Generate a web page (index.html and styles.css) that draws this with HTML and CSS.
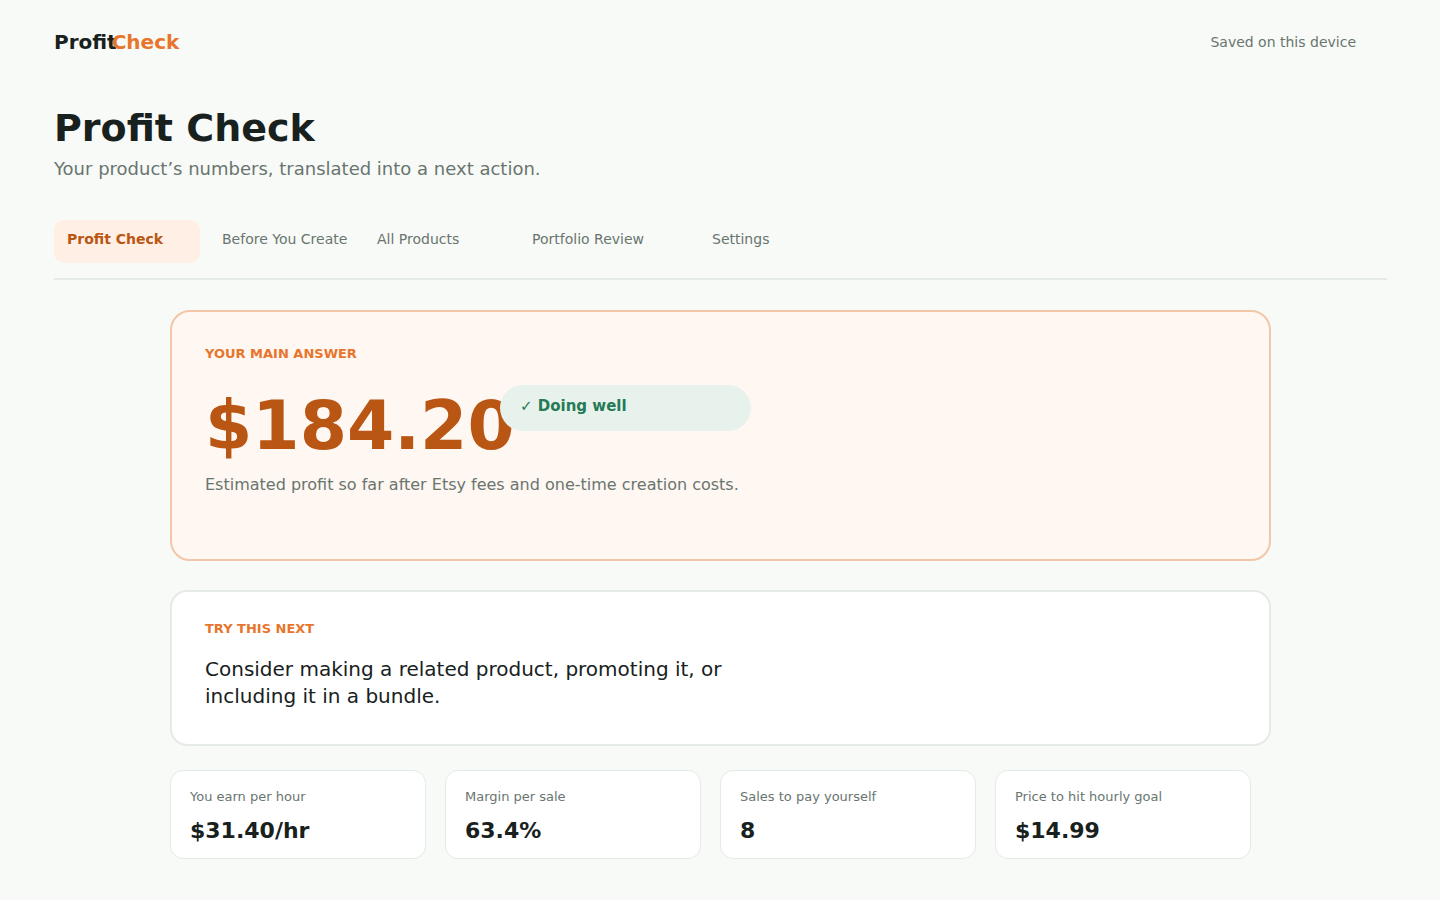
FILE: index.html
```html
<!DOCTYPE html>
<html lang="en">
<head>
<meta charset="utf-8">
<meta name="viewport" content="width=device-width, initial-scale=1">
<title>Profit Check</title>
<link rel="stylesheet" href="styles.css">
</head>
<body>
<div class="page">
  <header class="topbar">
    <div class="logo"><span>Profit</span><span class="logo-accent">Check</span></div>
    <span class="saved">Saved on this device</span>
  </header>
  <div class="intro">
    <h1 class="title">Profit Check</h1>
    <p class="subtitle">Your product’s numbers, translated into a next action.</p>
  </div>
  <nav class="tabs">
    <a class="tab tab-active" href="#" aria-current="page">Profit Check</a>
    <a class="tab" href="#">Before You Create</a>
    <a class="tab" href="#">All Products</a>
    <a class="tab tab-wide" href="#">Portfolio Review</a>
    <a class="tab" href="#">Settings</a>
  </nav>
  <main class="content">
    <section class="card answer">
      <h2 class="eyebrow">YOUR MAIN ANSWER</h2>
      <div class="result">
        <div class="amount">$184.20</div>
        <div class="pill">✓ Doing well</div>
      </div>
      <p class="note">Estimated profit so far after Etsy fees and one-time creation costs.</p>
    </section>
    <section class="card next">
      <h2 class="eyebrow">TRY THIS NEXT</h2>
      <p class="advice">Consider making a related product, promoting it, or including it in a bundle.</p>
    </section>
    <dl class="stats">
      <div class="stat"><dt>You earn per hour</dt><dd>$31.40/hr</dd></div>
      <div class="stat"><dt>Margin per sale</dt><dd>63.4%</dd></div>
      <div class="stat"><dt>Sales to pay yourself</dt><dd>8</dd></div>
      <div class="stat"><dt>Price to hit hourly goal</dt><dd>$14.99</dd></div>
    </dl>
  </main>
</div>
</body>
</html>
```
FILE: styles.css
```css
* {
  box-sizing: border-box;
}

body,
h1,
h2,
p,
dl,
dd {
  margin: 0;
}

body {
  background: #f8faf7;
  color: #18211d;
  font-family: "DejaVu Sans", sans-serif;
}

.page {
  padding: 30px 53px 40px 54px;
}

.topbar {
  display: flex;
  align-items: center;
  justify-content: space-between;
  padding-right: 31px;
}

.logo {
  display: flex;
  font-size: 20px;
  font-weight: 700;
  line-height: 24px;
}

.logo-accent {
  margin-left: -5px;
  color: #e8752c;
}

.saved {
  color: #69756f;
  font-size: 14px;
  line-height: 24px;
}

.intro {
  padding-top: 50px;
}

.title {
  font-size: 38px;
  font-weight: 700;
  line-height: 48px;
}

.subtitle {
  padding-top: 5px;
  color: #69756f;
  font-size: 18px;
  line-height: 24px;
}

.tabs {
  display: flex;
  gap: 9px;
  margin-top: 39px;
  padding-bottom: 15px;
  border-bottom: 2px solid #e4eae6;
}

.tab {
  width: 146px;
  padding: 9px 0 14px 13px;
  border-radius: 10px;
  color: #69756f;
  font-size: 14px;
  line-height: 20px;
  text-decoration: none;
  white-space: nowrap;
}

.tab-wide {
  width: 171px;
}

.tab-active {
  background: #ffefe4;
  color: #b95614;
  font-weight: 700;
}

.content {
  max-width: 1101px;
  margin: 30px auto 0;
}

.card {
  border: 2px solid #e4eae6;
  background: #ffffff;
}

.answer {
  padding: 32px 33px 62px;
  border-color: #f3c6a8;
  border-radius: 20px;
  background: #fff7f2;
}

.next {
  margin-top: 29px;
  padding: 27px 33px 34px;
  border-radius: 17px;
}

.eyebrow {
  color: #e8752c;
  font-size: 13px;
  font-weight: 700;
  line-height: 20px;
}

.result {
  display: flex;
  align-items: flex-start;
  padding-top: 21px;
}

/* The pill overlaps the end of the amount. */
.amount {
  flex: 0 0 295px;
  min-width: 0;
  color: #b95614;
  font-size: 68px;
  font-weight: 700;
  line-height: 82px;
}

.pill {
  width: 251px;
  padding: 11px 20px 15px;
  border-radius: 23px;
  background: #e8f2ec;
  color: #257b55;
  font-size: 15px;
  font-weight: 700;
  line-height: 20px;
}

.note {
  padding-top: 6px;
  color: #69756f;
  font-size: 16px;
  line-height: 24px;
}

.advice {
  max-width: 560px;
  padding-top: 17px;
  font-size: 20px;
  line-height: 27px;
}

.stats {
  display: grid;
  grid-template-columns: repeat(4, 1fr);
  gap: 19px;
  margin-top: 24px;
  padding-right: 20px;
}

.stat {
  padding: 16px 19px 13px;
  border: 1px solid #e4eae6;
  border-radius: 13px;
  background: #ffffff;
}

.stat dt {
  color: #69756f;
  font-size: 13px;
  line-height: 20px;
}

.stat dd {
  padding-top: 10px;
  font-size: 22px;
  font-weight: 700;
  line-height: 28px;
}
```
